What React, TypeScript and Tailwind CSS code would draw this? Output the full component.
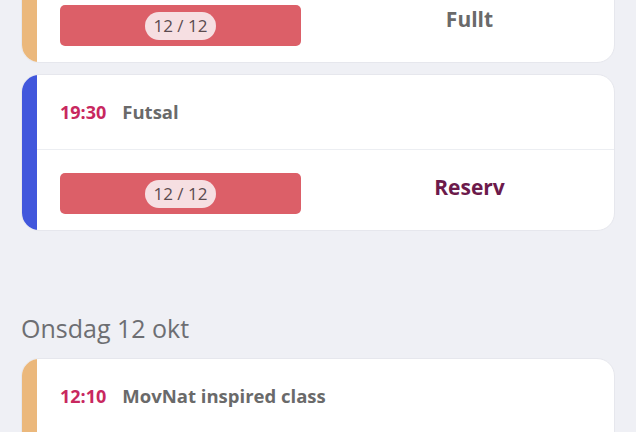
type Slot = {
  time: string;
  title: string;
  accent: string;
  booked?: number;
  capacity?: number;
  status?: "full" | "reserve";
};

function Card({ slot }: { slot: Slot }) {
  return (
    <div className="flex overflow-hidden rounded-[18px] border border-[#e6e7ed] bg-white">
      <div className={`w-[15px] shrink-0 ${slot.accent}`} />
      <div className="flex-1">
        <div className="flex h-[75px] items-center gap-[16px] border-b border-[#eceef2] pl-[23px]">
          <span className="text-[18px] font-bold text-[#c8285f]">{slot.time}</span>
          <span className="text-[18.5px] font-bold text-[#6a6a6a]">{slot.title}</span>
        </div>
        {slot.capacity != null && (
          <div className="flex h-[80px] items-start pl-[23px]">
            <div className="mt-[23px] flex h-[41px] w-[241px] items-center justify-center rounded-[5px] bg-[#dc5f68]">
              <span className="rounded-full bg-[#f6dfe2] px-[9px] py-[1px] text-[17px] leading-[26px] text-[#5b4b4f]">
                {slot.booked} / {slot.capacity}
              </span>
            </div>
            <div className="mt-[23px] flex flex-1 justify-center pl-[24px]">
              {slot.status === "full" ? (
                <span className="text-[21px] font-bold leading-[28px] text-[#6a6a6a]">Fullt</span>
              ) : (
                <span className="text-[21px] font-bold leading-[28px] text-[#6c1a4b]">Reserv</span>
              )}
            </div>
          </div>
        )}
      </div>
    </div>
  );
}

export default function App() {
  const tuesday: Slot[] = [
    { time: "18:00", title: "Crossfit", accent: "bg-[#ebb87c]", booked: 12, capacity: 12, status: "full" },
    { time: "19:30", title: "Futsal", accent: "bg-[#4157dc]", booked: 12, capacity: 12, status: "reserve" },
  ];
  const wednesday: Slot[] = [
    { time: "12:10", title: "MovNat inspired class", accent: "bg-[#ebb87c]", booked: 8, capacity: 12, status: "full" },
  ];

  return (
    <div
      className="h-[432px] overflow-hidden bg-[#eff0f5] px-[21px]"
      style={{ fontFamily: '"Open Sans", "Noto Sans", sans-serif' }}
    >
      <div className="-mt-[94px] flex flex-col gap-[11px]">
        {tuesday.map((s) => (
          <Card key={s.time} slot={s} />
        ))}
      </div>

      <h2 className="mt-[80px] mb-[12px] text-[25px] leading-[35px] text-[#6d6e72]">Onsdag 12 okt</h2>

      <div className="flex flex-col gap-[11px]">
        {wednesday.map((s) => (
          <Card key={s.time} slot={s} />
        ))}
      </div>
    </div>
  );
}
